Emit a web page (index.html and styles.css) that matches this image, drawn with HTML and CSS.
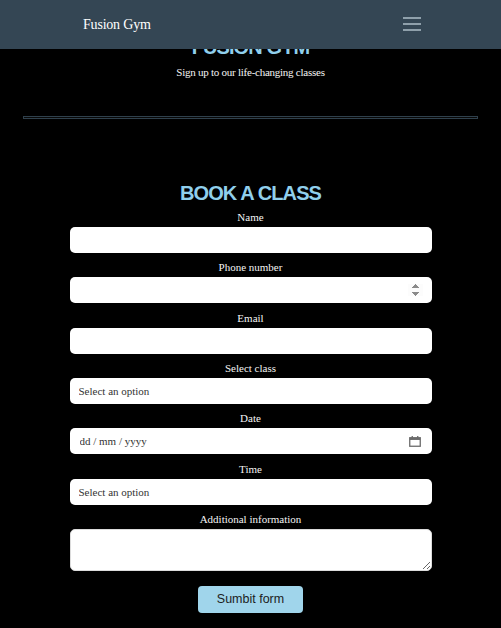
FILE: index.html
```html
<!DOCTYPE html>
<html lang="en">
<head>
<meta charset="utf-8">
<title>Fusion Gym</title>
<link rel="stylesheet" href="styles.css">
</head>
<body>
<nav class="navbar">
  <a class="brand" href="#">Fusion Gym</a>
  <button class="toggler" type="button" aria-label="Toggle navigation">
    <span class="bar"></span><span class="bar"></span><span class="bar"></span>
  </button>
</nav>
<header class="hero">
  <h1 class="title">FUSION GYM</h1>
  <p class="tagline">Sign up to our life-changing classes</p>
</header>
<hr class="divider">
<main class="booking">
  <h2 class="title">BOOK A CLASS</h2>
  <form class="form">
    <div class="field">
      <label for="name">Name</label>
      <input class="control" id="name" type="text">
    </div>
    <div class="field">
      <label for="phone">Phone number</label>
      <input class="control" id="phone" type="number">
    </div>
    <div class="field">
      <label for="email">Email</label>
      <input class="control" id="email" type="email">
    </div>
    <div class="field">
      <label for="klass">Select class</label>
      <select class="control select" id="klass"><option>Select an option</option></select>
    </div>
    <div class="field">
      <label for="date">Date</label>
      <div class="control date">
        <input class="date-input" id="date" type="text" placeholder="dd / mm / yyyy">
        <svg class="cal" width="12" height="11" viewBox="0 0 12 11" aria-hidden="true">
          <rect x="0.75" y="1.75" width="10.5" height="8.5" fill="none" stroke="#6b6b6b" stroke-width="1.3"/>
          <rect x="0.75" y="1.75" width="10.5" height="2.2" fill="#6b6b6b"/>
          <rect x="2.6" y="0" width="1.3" height="2" fill="#6b6b6b"/>
          <rect x="8.1" y="0" width="1.3" height="2" fill="#6b6b6b"/>
        </svg>
      </div>
    </div>
    <div class="field">
      <label for="time">Time</label>
      <select class="control select" id="time"><option>Select an option</option></select>
    </div>
    <div class="field">
      <label for="info">Additional information</label>
      <textarea class="control area" id="info"></textarea>
    </div>
    <button class="submit" type="submit">Sumbit form</button>
  </form>
</main>
</body>
</html>
```
FILE: styles.css
```css
* { box-sizing: border-box; }

body {
  margin: 0;
  background: #000;
  color: #f4f4f4;
  font-family: "Liberation Serif", "Times New Roman", serif;
}

.navbar {
  position: fixed;
  top: 0;
  left: 0;
  right: 0;
  height: 49px;
  background: #344654;
  display: flex;
  align-items: center;
  justify-content: space-between;
  padding: 0 80px 0 83px;
  z-index: 10;
}

.brand {
  color: #fff;
  text-decoration: none;
  font-size: 14px;
  letter-spacing: -0.2px;
}

.toggler {
  background: none;
  border: 0;
  padding: 0;
  width: 18px;
  display: flex;
  flex-direction: column;
  gap: 4px;
  margin-top: -1px;
}

.toggler .bar {
  display: block;
  height: 2px;
  background: #8fa0ab;
}

.hero {
  padding-top: 35px;
  text-align: center;
}

.title {
  margin: 0;
  font-family: "Liberation Sans", Arial, sans-serif;
  font-weight: bold;
  font-size: 20px;
  line-height: 24px;
  letter-spacing: -0.9px;
  color: #90cfec;
  text-align: center;
}

.tagline {
  margin: 5px 0 0;
  font-size: 11px;
  line-height: 16px;
  letter-spacing: -0.25px;
}

.divider {
  margin: 36px 23px 0;
  height: 3px;
  border: 1px solid #2f404c;
  background: #080808;
}

.booking {
  padding-top: 62px;
}

.form {
  width: 362px;
  margin: 4px auto 0;
  display: flex;
  flex-direction: column;
  gap: 6.35px;
}

.field {
  display: flex;
  flex-direction: column;
  gap: 2px;
}

.field label {
  text-align: center;
  font-size: 11px;
  line-height: 16px;
}

.control {
  width: 100%;
  height: 26px;
  border: 0;
  border-radius: 5px;
  background: #fff;
  padding: 0 9px;
  font-family: "Liberation Serif", "Times New Roman", serif;
  font-size: 11px;
  color: #333;
  outline: none;
}

input[type=number]::-webkit-inner-spin-button {
  opacity: 1;
}

.select {
  appearance: none;
  -webkit-appearance: none;
}

.date {
  display: flex;
  align-items: center;
  padding: 0 11px 0 10px;
}

.date-input {
  flex: 1;
  border: 0;
  padding: 0;
  min-width: 0;
  font: inherit;
  outline: none;
}

.date-input::placeholder {
  color: #333;
}

.area {
  height: 42px;
  border: 1px solid #dcdcdc;
  padding: 4px 9px;
  resize: vertical;
}

.submit {
  align-self: center;
  margin-top: 8.5px;
  width: 105px;
  height: 27px;
  border: 0;
  border-radius: 4px;
  background: #a0d5eb;
  color: #1d1d1d;
  font-family: "Liberation Sans", Arial, sans-serif;
  font-size: 12.5px;
}
```
